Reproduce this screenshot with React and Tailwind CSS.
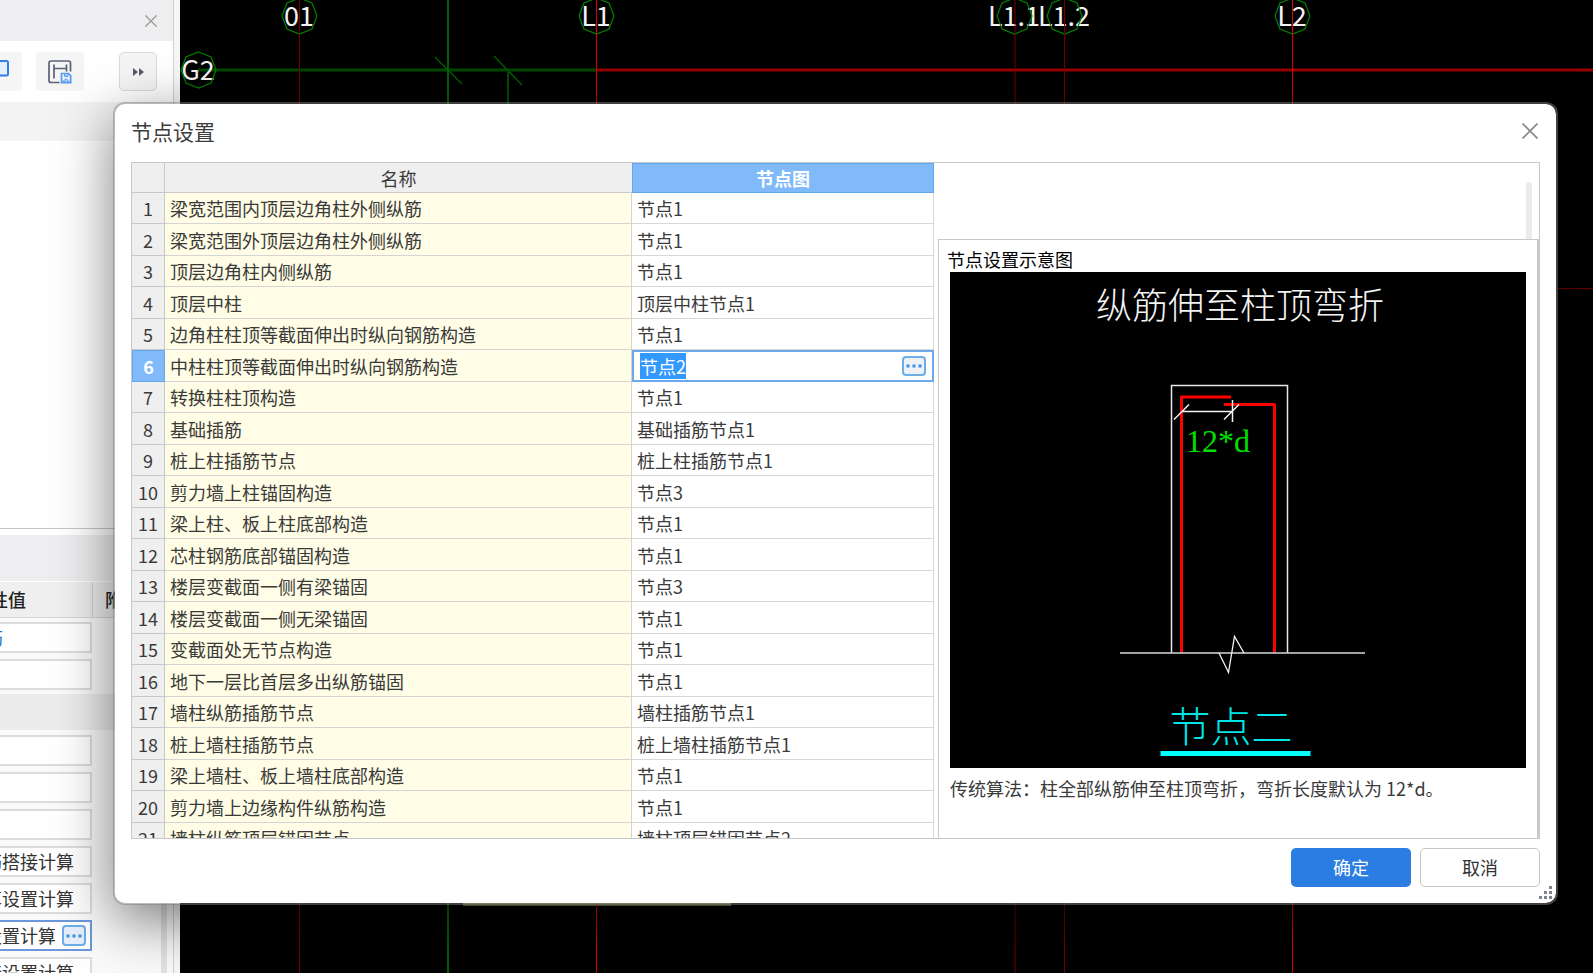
import { useEffect, useRef } from "react";

const ROWS = [
  ["梁宽范围内顶层边角柱外侧纵筋", "节点1"],
  ["梁宽范围外顶层边角柱外侧纵筋", "节点1"],
  ["顶层边角柱内侧纵筋", "节点1"],
  ["顶层中柱", "顶层中柱节点1"],
  ["边角柱柱顶等截面伸出时纵向钢筋构造", "节点1"],
  ["中柱柱顶等截面伸出时纵向钢筋构造", "节点2"],
  ["转换柱柱顶构造", "节点1"],
  ["基础插筋", "基础插筋节点1"],
  ["桩上柱插筋节点", "桩上柱插筋节点1"],
  ["剪力墙上柱锚固构造", "节点3"],
  ["梁上柱、板上柱底部构造", "节点1"],
  ["芯柱钢筋底部锚固构造", "节点1"],
  ["楼层变截面一侧有梁锚固", "节点3"],
  ["楼层变截面一侧无梁锚固", "节点1"],
  ["变截面处无节点构造", "节点1"],
  ["地下一层比首层多出纵筋锚固", "节点1"],
  ["墙柱纵筋插筋节点", "墙柱插筋节点1"],
  ["桩上墙柱插筋节点", "桩上墙柱插筋节点1"],
  ["梁上墙柱、板上墙柱底部构造", "节点1"],
  ["剪力墙上边缘构件纵筋构造", "节点1"],
  ["墙柱纵筋顶层锚固节点", "墙柱顶层锚固节点2"],
];
const SELECTED = 5;

function Dots() {
  return (
    <svg width="16" height="4" viewBox="0 0 16 4" fill="#3b8eea" aria-hidden="true">
      <rect x="0.500" y="0.500" width="3" height="3" />
      <rect x="6.500" y="0.500" width="3" height="3" />
      <rect x="12.500" y="0.500" width="3" height="3" />
    </svg>
  );
}

function Cross({ size, color }) {
  return (
    <svg width={size} height={size} viewBox="0 0 16 16" stroke={color} strokeWidth="1.700" aria-hidden="true">
      <path d="M0.5 0.5 15.5 15.5M15.5 0.5 0.5 15.5" />
    </svg>
  );
}

const FIELD_STYLES = {
  plain: "h-[27px] w-full min-w-0 bg-transparent text-right text-[18px] text-[#333] outline-none",
  linked: "h-[27px] w-full min-w-0 bg-transparent pr-[71px] text-right text-[18px] text-[#1f6fc4] outline-none",
};

function Property({ label, value = "", kind = "plain", active = false }) {
  return (
    <div className="flex w-[92px] justify-end overflow-hidden">
      <div
        className={
          active
            ? "flex h-[31px] w-[200px] shrink-0 items-center border-2 border-[#6c97dc] bg-white pr-1"
            : "flex h-[31px] w-[200px] shrink-0 items-center border-2 border-[#dcdcdc] bg-white pr-4"
        }
      >
        <input aria-label={label} defaultValue={value} className={FIELD_STYLES[kind]} />
        {active && (
          <button
            type="button"
            aria-label="更多"
            className="ml-[7px] flex h-[21px] w-6 shrink-0 items-center justify-center rounded-[4px] border-2 border-[#6aaeea] bg-[#e8eefa]"
          >
            <Dots />
          </button>
        )}
      </div>
    </div>
  );
}

function SidePanel() {
  return (
    <aside className="flex h-full w-[180px] shrink-0 bg-[#f7f7f7]">
      <div className="flex min-w-0 flex-1 flex-col overflow-hidden border-r border-[#d0d0d0] bg-white">
        <div className="flex h-[41px] shrink-0 items-center justify-end bg-[#eeeef0] pr-4">
          <button type="button" aria-label="关闭面板">
            <Cross size={12} color="#999" />
          </button>
        </div>
        <div className="flex h-[61px] shrink-0 items-center">
          <button type="button" aria-label="布局" className="h-[39px] w-[22px] rounded-r bg-[#f5f5f5]">
            <svg width="10" height="20" viewBox="0 0 10 20" className="mb-2" fill="#e3effd" stroke="#2f7fe6" strokeWidth="2" aria-hidden="true">
              <path d="M-4 3H6.500Q8 3 8 4.500V16Q8 17.500 6.500 17.500H-4Z" />
            </svg>
          </button>
          <button
            type="button"
            aria-label="保存布局"
            className="ml-[14px] flex h-[39px] w-12 items-center justify-center rounded bg-[#f5f5f5]"
          >
            <svg width="24" height="24" viewBox="0 0 24 24" fill="none" stroke="#5a6375" strokeWidth="1.700" aria-hidden="true">
              <path d="M11.500 22.500H3Q1 22.500 1 20.500V3Q1 1 3 1H20.500Q22.500 1 22.500 3V11.500" />
              <path d="M6 4.500V18.500M6 8.500H18.500M18.500 4.500V11.500" />
              <path d="M13.500 13.500H20.500L22.700 15.700V22.700H13.500Z" stroke="#5b9cee" fill="#eaf3fe" />
              <path d="M14.500 22 18 18.500 21.500 22ZM16.500 14V16.500H20V14" stroke="#5b9cee" fill="#a9cdf8" strokeWidth="1" />
            </svg>
          </button>
          <button
            type="button"
            aria-label="展开"
            className="ml-[35px] flex h-[39px] w-[38px] items-center justify-center rounded-[5px] border border-[#d9d9d9] bg-[#f5f5f5]"
          >
            <svg width="11" height="8" viewBox="0 0 11 8" fill="#555b6b" aria-hidden="true">
              <path d="M0 0 5 4 0 8ZM6 0 11 4 6 8Z" />
            </svg>
          </button>
        </div>
        <div className="h-[39px] shrink-0 bg-[#f3f3f3]" />
        <div className="min-h-0 flex-1 border-b border-[#c6c6c6]" />
        <div className="flex h-[444px] shrink-0 flex-col">
          <div className="mt-[6px] h-[46px] shrink-0 bg-[#eeeef0]" />
          <div className="mt-[1px] flex h-9 shrink-0 items-center border-b border-[#d5d5d5] bg-[#efefef] text-[18px] text-[#222]">
            <div className="flex h-full w-[93px] items-center justify-end overflow-hidden border-r border-[#cfcfcf] pr-[66px] whitespace-nowrap">
              <span className="font-medium">属性值</span>
            </div>
            <div className="pl-3 font-medium whitespace-nowrap">附加</div>
          </div>
          <div className="flex flex-1 overflow-hidden bg-[#fafafa]">
            <div className="flex min-w-0 flex-1 flex-col">
              <div className="flex shrink-0 flex-col gap-[6px] py-1">
                <Property label="名称" value="纵筋" kind="linked" />
                <Property label="结构类别" />
              </div>
              <div className="h-9 shrink-0 bg-[#ececec]" />
              <div className="flex shrink-0 flex-col gap-[6px] pt-[5px]">
                <Property label="材质" />
                <Property label="混凝土类型" />
                <Property label="混凝土强度" />
                <Property label="钢筋搭接" value="按默认钢筋搭接计算" />
                <Property label="计算设置" value="按默认计算设置计算" />
                <Property label="节点设置" value="按默认节点设置计算" active />
                <Property label="搭接设置" value="按默认搭接设置计算" />
              </div>
            </div>
            <div className="mr-[6px] w-[6px] shrink-0 bg-[#e2e2e2]" />
          </div>
        </div>
      </div>
      <div className="w-[6px] shrink-0" />
    </aside>
  );
}

const AXES = [
  { x: 119, y: 16, label: "01" },
  { x: 18, y: 70, label: "G2" },
  { x: 416, y: 16, label: "L1" },
  { x: 834, y: 16, label: "L1.1" },
  { x: 884, y: 16, label: "L1.2" },
  { x: 1112, y: 16, label: "L2" },
];

function CadCanvas() {
  return (
    <main className="h-full min-w-0 flex-1 bg-black">
      <svg className="block h-full w-full" aria-label="轴网">
        <path d="M18 70H416" stroke="#004800" strokeWidth="3" />
        <line x1="416" y1="70" x2="100%" y2="70" stroke="#960000" strokeWidth="3" />
        <line x1="1378" y1="288.500" x2="100%" y2="288.500" stroke="#700000" />
        <rect x="283" y="900" width="268" height="6" fill="#70784a" />
        <line x1="268" y1="0" x2="268" y2="100%" stroke="#006000" strokeWidth="2" />
        <path d="M255 57 282 84M314 56 342 85" stroke="#006400" strokeWidth="1.300" />
        <path d="M328 70V110" stroke="#004c00" strokeWidth="2" />
        {AXES.map(({ x, y, label }) => (
          <text key={label} x={x} y={y + 10} textAnchor="middle" fill="#f2f2f2" fontSize="27" className="font-['Noto_Sans_CJK_SC',sans-serif]">
            {label}
          </text>
        ))}
        {AXES.map(({ x, y, label }) => (
          <path
            key={label}
            d="M0.500 -18 13 -13 18 0 13 13 0.500 18 -12 13 -17 0 -12 -13Z"
            transform={`translate(${x} ${y})`}
            fill="none"
            stroke="#008200"
            strokeWidth="1.200"
          />
        ))}
        <line x1="119.500" y1="0" x2="119.500" y2="100%" stroke="#780000" />
        <line x1="416.500" y1="0" x2="416.500" y2="100%" stroke="#d80000" />
        <line x1="835" y1="0" x2="835" y2="100%" stroke="#700000" />
        <line x1="884.500" y1="0" x2="884.500" y2="100%" stroke="#700000" />
        <line x1="1112.500" y1="0" x2="1112.500" y2="100%" stroke="#e00000" />
      </svg>
    </main>
  );
}

function NodeTable() {
  const editor = useRef(null);
  useEffect(() => {
    editor.current.focus({ preventScroll: true });
    editor.current.select();
  }, []);

  return (
    <table className="w-full table-fixed border-separate border-spacing-0 text-[18px] leading-[26px] text-[#3a3a3a]">
      <colgroup>
        <col className="w-[33px]" />
        <col />
        <col className="w-[302px]" />
      </colgroup>
      <thead>
        <tr className="h-[30px]">
          <th className="border-r border-b border-[#c8c8c8] bg-[#efefef] p-0" aria-label="序号" />
          <th className="border-b border-[#c8c8c8] bg-[#efefef] p-0 font-normal">名称</th>
          <th className="border border-[#62a8ee] bg-[#80bafa] p-0 font-bold text-white">节点图</th>
        </tr>
      </thead>
      <tbody>
        {ROWS.map(([name, node], i) => {
          const selected = i === SELECTED;
          return (
            <tr key={name} className="h-8 odd:h-[31px]">
              <th
                scope="row"
                className={
                  selected
                    ? "border border-[#62a8ee] bg-[#80bafa] p-0 font-bold text-white"
                    : "border-r border-b border-[#c8c8c8] bg-[#efefef] p-0 font-normal"
                }
              >
                {i + 1}
              </th>
              <td className="border-r border-b border-[#d4d4d4] bg-[#fffde5] py-0 pr-0 pl-[5px] whitespace-nowrap">{name}</td>
              {selected ? (
                <td className="border-2 border-[#6aa9ea] bg-white p-0">
                  <div className="flex h-[27px] items-center pr-[6px] pl-[6px]">
                    <input
                      ref={editor}
                      aria-label={name}
                      defaultValue={node}
                      className="h-[26px] min-w-0 flex-1 bg-white text-[18px] leading-[26px] outline-none selection:bg-[#3399ff] selection:text-white"
                    />
                    <button
                      type="button"
                      aria-label="选择节点"
                      className="flex h-5 w-6 items-center justify-center rounded-[4px] border-2 border-[#6aaeea] bg-[#eef1f8]"
                    >
                      <Dots />
                    </button>
                  </div>
                </td>
              ) : (
                <td className="border-r border-b border-[#d8d8d8] bg-white py-0 pr-0 pl-[5px] whitespace-nowrap">{node}</td>
              )}
            </tr>
          );
        })}
      </tbody>
    </table>
  );
}

function NodeDrawing() {
  return (
    <svg viewBox="0 0 576 496" className="block w-full bg-black" fill="none" aria-label="纵筋伸至柱顶弯折">
      <text x="290" y="47" textAnchor="middle" fill="#f4f4f4" fontSize="36" className="font-['Noto_Sans_CJK_SC',sans-serif] font-light">
        纵筋伸至柱顶弯折
      </text>
      <path d="M221.500 381V113.500H337.500V381" stroke="#e8e8e8" strokeWidth="1.500" />
      <path d="M231.500 381V125H281M274 132.500H324.500V381" stroke="#f00" strokeWidth="3" strokeLinejoin="round" />
      <path d="M232 139.500H282M282.500 128V150M224 147.500 239 132.500M274 147.500 289 132.500" stroke="#f4f4f4" strokeWidth="1.500" />
      <text x="236" y="180" fill="#00e000" fontSize="32" className="font-['Liberation_Serif',serif]">
        12*d
      </text>
      <path d="M170 381H415" stroke="#d8d8d8" strokeWidth="1.500" />
      <path d="M269 381 278.500 400.500 284.500 364.500 294 381" stroke="#f4f4f4" strokeWidth="1.300" />
      <text x="281" y="470" textAnchor="middle" fill="#00e5e5" fontSize="41" className="font-['Noto_Sans_CJK_SC',sans-serif] font-light">
        节点二
      </text>
      <path d="M210.500 481.500H360.500" stroke="#0ff" strokeWidth="5" />
    </svg>
  );
}

function SettingsDialog() {
  return (
    <div
      role="dialog"
      aria-labelledby="dialog-title"
      className="absolute top-[102px] right-[35px] bottom-[68px] left-[113px] flex flex-col rounded-[12px] border-2 border-[#80808080] bg-white bg-clip-padding px-4 shadow-[0_16px_56px_rgba(0,0,0,0.5)]"
    >
      <header className="flex h-[58px] shrink-0 items-start justify-between pt-3 pr-[2px]">
        <h1 id="dialog-title" className="text-[21px] leading-[30px] text-[#3c3c3c]">节点设置</h1>
        <button type="button" aria-label="关闭" className="pt-[7px]">
          <Cross size={16} color="#8a8a8a" />
        </button>
      </header>

      <div className="flex min-h-0 flex-1 border border-[#c8c8c8]">
        <div className="w-[802px] shrink-0 overflow-hidden">
          <NodeTable />
        </div>
        <section className="ml-1 flex min-w-0 flex-1 flex-col">
          <div className="flex h-[76px] shrink-0 justify-end pt-[19px] pr-[7px]">
            <div className="w-[6px] rounded-t-[3px] bg-[#ebebeb]" />
          </div>
          <div className="min-h-0 flex-1 overflow-hidden border-t border-r-2 border-l border-[#c8c8c8] pr-[11px] pl-[11px]">
            <h2 className="-ml-[3px] pt-[6px] text-[18px] leading-[26px] text-black">节点设置示意图</h2>
            <NodeDrawing />
            <p className="pt-[7px] text-[18px] leading-[26px] whitespace-nowrap text-[#3a3a3a]">
              传统算法：柱全部纵筋伸至柱顶弯折，弯折长度默认为 12*d。
            </p>
          </div>
        </section>
      </div>

      <footer className="flex h-16 shrink-0 items-start justify-end gap-[9px] pt-[9px]">
        <button type="button" className="h-[39px] w-[120px] rounded-[5px] bg-[#2b7de1] text-[18px] text-white">
          确定
        </button>
        <button type="button" className="h-[39px] w-[120px] rounded-[5px] border border-[#c8c8c8] bg-white text-[18px] text-[#333]">
          取消
        </button>
      </footer>
      <svg className="absolute right-1 bottom-1" width="13" height="13" viewBox="0 0 13 13" fill="#7d838c" aria-hidden="true">
        <path d="M10 0h3v3h-3zM5 5h3v3h-3zM10 5h3v3h-3zM0 10h3v3h-3zM5 10h3v3h-3zM10 10h3v3h-3z" />
      </svg>
    </div>
  );
}

export default function App() {
  return (
    <div className="relative flex h-screen overflow-hidden font-['Noto_Sans_CJK_SC',sans-serif]">
      <SidePanel />
      <CadCanvas />
      <SettingsDialog />
    </div>
  );
}
